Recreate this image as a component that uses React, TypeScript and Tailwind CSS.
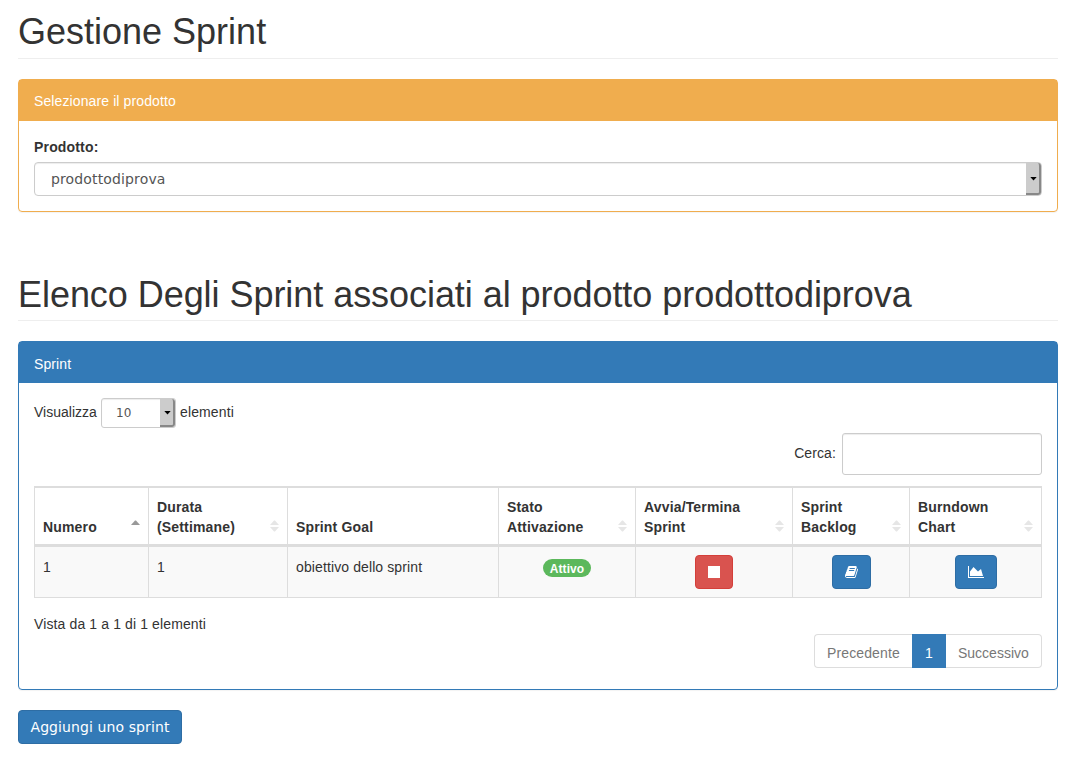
import React from "react";

const BOOK_PATH =
  "M1639 478q40 57 18 129l-275 906q-19 64-76.5 107.5t-122.5 43.5h-923q-77 0-148.5-53.5t-99.5-131.5q-24-67-2-127 0-4 3-27t4-37q1-8-3-21.5t-3-19.5q2-11 8-21t16.5-23.5 16.5-23.5q23-38 45-91.5t30-91.5q3-10 .5-30t-.5-28q3-11 17-28t17-23q21-36 42-92t25-90q1-9-2.5-32t.5-28q4-13 22-30.5t22-22.5q19-26 42.5-84.5t27.5-96.5q1-8-3-25.5t-2-26.5q2-8 9-18t18-23 17-21q8-12 16.5-30.5t15-35 16-36 19.5-32 26.5-23.5 36-11.5 47.5 5.5l-1 3q38-9 51-9h761q74 0 114 56t18 130l-274 906q-36 119-71.5 153.5t-128.5 34.5h-869q-27 0-38 15-11 16-1 43 24 70 144 70h923q29 0 56-15.5t35-41.5l300-987q7-22 5-57 38 15 59 43zm-1064 2q-4 13 2 22.5t20 9.5h608q13 0 25.5-9.5t16.5-22.5l21-64q4-13-2-22.5t-20-9.5h-608q-13 0-25.5 9.5t-16.5 22.5zm-83 256q-4 13 2 22.5t20 9.5h608q13 0 25.5-9.5t16.5-22.5l21-64q4-13-2-22.5t-20-9.5h-608q-13 0-25.5 9.5t-16.5 22.5z";

const AREA_CHART_PATH =
  "M2048 1536v128h-2048v-1536h128v1408h1920zm-384-1024l256 896h-1664v-576l448-576 576 576z";

function SelectArrow() {
  return (
    <span className="flex w-[15px] shrink-0 items-center justify-center self-stretch rounded-r-[3px] border-r-2 border-b-2 border-[#888] bg-[#ccc] pl-px">
      <svg width="7" height="4" viewBox="0 0 7 4" className="mt-px ml-px shrink-0">
        <path d="M0.3 0h6.4L3.5 3.6z" fill="#000" />
      </svg>
    </span>
  );
}

function SortIcon({ active }: { active?: boolean }) {
  return (
    <svg width="9" height="12" viewBox="0 0 9 12" className="mb-[5px] shrink-0">
      {active ? (
        <path d="M0 5L4 .4h1L9 5z" fill="#999" />
      ) : (
        <path d="M0 5L4 .4h1L9 5zM0 7h9L5 11.4H4z" fill="#e6e6e6" />
      )}
    </svg>
  );
}

const columns = [
  { lines: ["Numero"], sort: "asc" },
  { lines: ["Durata", "(Settimane)"], sort: "both" },
  { lines: ["Sprint Goal"], sort: "none" },
  { lines: ["Stato", "Attivazione"], sort: "both" },
  { lines: ["Avvia/Termina", "Sprint"], sort: "both" },
  { lines: ["Sprint", "Backlog"], sort: "both" },
  { lines: ["Burndown", "Chart"], sort: "both" },
];

const cell = "h-[51px] border-r border-b border-[#ddd] bg-[#f9f9f9] px-2 pt-2 align-top";

export default function App() {
  return (
    <div className="h-[761px] w-[1072px] bg-white pr-[14px] pl-[18px] font-['Liberation_Sans',Arial,sans-serif] text-sm leading-5 text-[#333]">
      <h1 className="flex h-[59px] items-end border-b border-[#eee] pb-[6px] text-[36px] leading-[40px]">
        Gestione Sprint
      </h1>

      <section className="mt-5 h-[133px] rounded border border-[#f0ad4e] shadow-[0_1px_1px_rgba(0,0,0,0.05)]">
        <h3 className="flex h-[41px] items-center bg-[#f0ad4e] px-[15px] tracking-[0.11px] text-white">
          Selezionare il prodotto
        </h3>
        <div className="px-[15px] pt-4">
          <label className="block h-[25px] font-bold tracking-[0.17px]">Prodotto:</label>
          <div className="flex h-[34px] rounded border border-[#ccc] font-['DejaVu_Sans',sans-serif] text-[#555] shadow-[inset_0_1px_1px_rgba(0,0,0,0.075)]">
            <span className="flex grow items-center pl-4 tracking-[0.14px]">prodottodiprova</span>
            <SelectArrow />
          </div>
        </div>
      </section>

      <h1 className="mt-[59px] flex h-[50px] items-end border-b border-[#eee] pb-[5px] text-[36px] leading-[40px] tracking-[-0.05px] whitespace-nowrap">
        Elenco Degli Sprint associati al prodotto prodottodiprova
      </h1>

      <section className="mt-5 h-[349px] rounded border border-[#337ab7] shadow-[0_1px_1px_rgba(0,0,0,0.05)]">
        <h3 className="flex h-[41px] items-center bg-[#337ab7] px-[15px] pt-0.5 tracking-[0.1px] text-white">Sprint</h3>
        <div className="px-[15px] pt-[15px]">
          <div className="flex h-[30px] items-center">
            <span className="w-[67px] pb-0.5">Visualizza</span>
            <div className="mr-1 flex h-[30px] w-[75px] rounded-[3px] border border-[#ccc] font-['DejaVu_Sans',sans-serif] text-xs text-[#555] shadow-[inset_0_1px_1px_rgba(0,0,0,0.075)]">
              <span className="flex grow items-center pl-3.5 tracking-[0.2px]">10</span>
              <SelectArrow />
            </div>
            <span className="pb-0.5 tracking-[0.12px]">elementi</span>
          </div>
          <div className="mt-[5px] flex h-[42px] items-center justify-end">
            <span className="mr-1.5 pb-0.5 tracking-[0.1px]">Cerca:</span>
            <input
              aria-label="Cerca"
              className="h-[42px] w-[200px] rounded-[3px] border border-[#ccc] shadow-[inset_0_1px_1px_rgba(0,0,0,0.075)]"
            />
          </div>

          <table className="mt-[11px] w-[1008px] table-fixed border-separate border-spacing-0 border-t-2 border-l border-[#ddd]">
            <colgroup>
              <col className="w-[114px]" />
              <col className="w-[139px]" />
              <col className="w-[211px]" />
              <col className="w-[137px]" />
              <col className="w-[157px]" />
              <col className="w-[117px]" />
              <col className="w-[132px]" />
            </colgroup>
            <thead>
              <tr>
                {columns.map((c) => (
                  <th
                    key={c.lines.join(" ")}
                    className="h-[59px] border-r border-b-3 border-[#ddd] px-2 pb-[7px] text-left align-bottom font-bold"
                  >
                    <div className="flex items-end justify-between">
                      <span className="tracking-[0.16px] whitespace-nowrap">
                        {c.lines.map((l) => (
                          <span key={l} className="block">
                            {l}
                          </span>
                        ))}
                      </span>
                      {c.sort !== "none" && <SortIcon active={c.sort === "asc"} />}
                    </div>
                  </th>
                ))}
              </tr>
            </thead>
            <tbody>
              <tr>
                <td className={cell}>
                  <span className="block pt-0.5">1</span>
                </td>
                <td className={cell}>
                  <span className="block pt-0.5">1</span>
                </td>
                <td className={cell}>
                  <span className="block pt-0.5 tracking-[0.11px]">obiettivo dello sprint</span>
                </td>
                <td className={cell}>
                  <div className="flex justify-center pt-1">
                    <span className="flex h-[18px] w-12 items-center justify-center rounded-full bg-[#5cb85c] pt-px text-xs font-bold tracking-[0.1px] text-white">
                      Attivo
                    </span>
                  </div>
                </td>
                <td className={cell}>
                  <button className="mx-auto flex h-[34px] w-[38px] items-center justify-center rounded border border-[#d43f3a] bg-[#d9534f]">
                    <span className="h-3 w-3 bg-white" />
                  </button>
                </td>
                <td className={cell}>
                  <button className="mx-auto flex h-[34px] w-[39px] items-center justify-center rounded border border-[#2e6da4] bg-[#337ab7] pl-px">
                    <svg width="14" height="14" viewBox="0 0 1792 1792" fill="#fff">
                      <path d={BOOK_PATH} />
                    </svg>
                  </button>
                </td>
                <td className={cell}>
                  <button className="mx-auto flex h-[34px] w-[42px] items-center justify-center rounded border border-[#2e6da4] bg-[#337ab7]">
                    <svg width="16" height="14" viewBox="0 0 2048 1792" fill="#fff">
                      <path d={AREA_CHART_PATH} />
                    </svg>
                  </button>
                </td>
              </tr>
            </tbody>
          </table>

          <div className="mt-4 h-5 tracking-[0.12px]">Vista da 1 a 1 di 1 elementi</div>
          <div className="flex justify-end">
            <div className="flex h-[34px] text-[#777]">
              <span className="flex w-[98px] items-center rounded-l border border-r-0 border-[#ddd] pt-[3px] pl-3 tracking-[0.12px]">
                Precedente
              </span>
              <span className="flex w-[34px] items-center justify-center bg-[#337ab7] pt-[3px] text-white">1</span>
              <span className="flex w-24 items-center rounded-r border border-l-0 border-[#ddd] pt-[3px] pl-3">
                Successivo
              </span>
            </div>
          </div>
        </div>
      </section>

      <button className="mt-5 flex h-[34px] w-[164px] items-center justify-center rounded border border-[#2e6da4] bg-[#337ab7] font-['DejaVu_Sans',sans-serif] tracking-[0.1px] whitespace-nowrap text-white">
        Aggiungi uno sprint
      </button>
    </div>
  );
}
